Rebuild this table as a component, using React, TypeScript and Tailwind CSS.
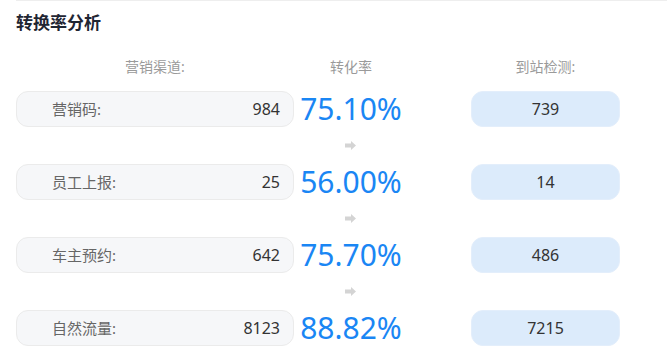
const rows = [
  { label: "营销码:", count: 984, rate: "75.10%", arrived: 739 },
  { label: "员工上报:", count: 25, rate: "56.00%", arrived: 14 },
  { label: "车主预约:", count: 642, rate: "75.70%", arrived: 486 },
  { label: "自然流量:", count: 8123, rate: "88.82%", arrived: 7215 },
];

function Arrow() {
  return (
    <svg width="11" height="9" viewBox="0 0 11 9" className="block">
      <path d="M0 2.5h6V0l5 4.5L6 9V6.5H0z" fill="#d4d4d4" />
    </svg>
  );
}

export default function App() {
  return (
    <div
      className="h-[354px] w-[667px] overflow-hidden bg-white"
      style={{ fontFamily: '"Noto Sans", "Noto Sans CJK SC", sans-serif' }}
    >
      <div className="ml-4 border-t border-[#eeeeee] pt-[9px]">
        <h2 className="text-[17px] font-bold leading-[26px] text-[#1f2633]">转换率分析</h2>
      </div>

      <div className="mt-[21px] pl-4">
        <div className="flex text-[14px] leading-[20px] text-[#9a9a9a]">
          <div className="w-[278px] text-center">营销渠道:</div>
          <div className="w-[114px] text-center">转化率</div>
          <div className="ml-[63px] w-[149px] text-center">到站检测:</div>
        </div>

        <div className="mt-[14px] flex flex-col">
          {rows.map((r, i) => (
            <div key={r.label}>
              {i > 0 && (
                <div className="flex h-[37px] items-center pl-[329px]">
                  <Arrow />
                </div>
              )}
              <div className="flex h-[36px] items-center">
                <div className="flex h-[36px] w-[278px] items-center justify-between rounded-[12px] border border-[#ebebeb] bg-[#f6f7f9] pl-[35px] pr-[13px]">
                  <span className="text-[15px] text-[#666666]">{r.label}</span>
                  <span className="text-[16px] text-[#333333]">{r.count}</span>
                </div>
                <div className="w-[114px] text-center text-[30px] leading-none text-[#1a86f4]">
                  {r.rate}
                </div>
                <div className="ml-[63px] flex h-[36px] w-[149px] items-center justify-center rounded-[12px] border border-[#e3eefb] bg-[#dcebfb] text-[16px] text-[#333333]">
                  {r.arrived}
                </div>
              </div>
            </div>
          ))}
        </div>
      </div>
    </div>
  );
}
